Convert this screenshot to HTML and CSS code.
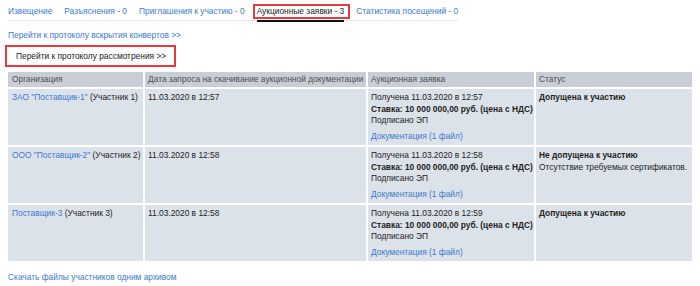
FILE: index.html
```html
<!doctype html>
<html>
<head>
    <meta http-equiv="Content-Type" content="text/html; charset=UTF-8" />
    <title>Аукционные заявки</title>
    <link rel="stylesheet" href="styles.css">
</head>
<body>

    <div class="tabs">
        <a class="tab" href="#">Извещение</a>
        <a class="tab" href="#">Разъяснения - 0</a>
        <a class="tab" href="#">Приглашения к участию - 0</a>
        <span class="tab active">Аукционные заявки - 3</span>
        <a class="tab" href="#">Статистика посещений - 0</a>
    </div>

    <div class="protocol_link"><a href="#">Перейти к протоколу вскрытия конвертов &gt;&gt;</a></div>

    <div class="btn_row"><span class="btn marked">Перейти к протоколу рассмотрения &gt;&gt;</span></div>

    <table class="bids">
        <tr class="head_row">
            <th class="col_org">Организация</th>
            <th class="col_date">Дата запроса на скачивание аукционной документации</th>
            <th class="col_bid">Аукционная заявка</th>
            <th class="col_status">Статус</th>
        </tr>
        <tr>
            <td><a href="#">ЗАО "Поставщик-1"</a> (Участник 1)</td>
            <td>11.03.2020 в 12:57</td>
            <td>
                <div>Получена 11.03.2020 в 12:57</div>
                <div class="rate">Ставка: 10 000 000,00 руб. (цена с НДС)</div>
                <div>Подписано ЭП</div>
                <div class="docs"><a href="#">Документация (1 файл)</a></div>
            </td>
            <td><div class="rate">Допущена к участию</div></td>
        </tr>
        <tr>
            <td><a href="#">ООО "Поставщик-2"</a> (Участник 2)</td>
            <td>11.03.2020 в 12:58</td>
            <td>
                <div>Получена 11.03.2020 в 12:58</div>
                <div class="rate">Ставка: 10 000 000,00 руб. (цена с НДС)</div>
                <div>Подписано ЭП</div>
                <div class="docs"><a href="#">Документация (1 файл)</a></div>
            </td>
            <td>
                <div class="rate">Не допущена к участию</div>
                <div>Отсутствие требуемых сертификатов.</div>
            </td>
        </tr>
        <tr>
            <td><a href="#">Поставщик-3</a> (Участник 3)</td>
            <td>11.03.2020 в 12:58</td>
            <td>
                <div>Получена 11.03.2020 в 12:59</div>
                <div class="rate">Ставка: 10 000 000,00 руб. (цена с НДС)</div>
                <div>Подписано ЭП</div>
                <div class="docs"><a href="#">Документация (1 файл)</a></div>
            </td>
            <td><div class="rate">Допущена к участию</div></td>
        </tr>
    </table>

    <div class="archive_link"><a href="#">Скачать файлы участников одним архивом</a></div>

</body>
</html>
```

FILE: styles.css
```css
body {
    margin: 0;
    padding: 5px 8px;
    font-family: "Liberation Sans", Arial, Helvetica, sans-serif;
    font-size: 8.4px;
    line-height: 12px;
    color: #222222;
    background: #FFFFFF;
}
a {
    color: #3a7ad0;
    text-decoration: none;
}
.tabs {
    display: inline-flex;
    gap: 12px;
    border-bottom: 1px solid #e4e4e4;
}
.tab {
    padding-bottom: 3px;
}
.tab.active {
    position: relative;
    color: #222222;
    border-bottom: 2px solid #111111;
    margin-bottom: -2px;
}
/* red marker drawn over the active tab */
.tab.active::after {
    content: "";
    position: absolute;
    left: -4px;
    right: -6px;
    top: -1px;
    bottom: 1px;
    border: 2px solid #e8393b;
}
.protocol_link {
    margin-top: 8px;
}
.btn_row {
    margin-top: 4px;
}
.btn {
    display: inline-block;
    margin-left: -3px;
    padding: 3px 8px 3px 9px;
    background: #FFFFFF;
}
.marked {
    border: 2px solid #e8393b;
}
table.bids {
    width: calc(100% + 4px);
    margin: 3px -2px 0 -2px;
    border-collapse: separate;
    border-spacing: 2px;
    table-layout: fixed;
}
.bids th,
.bids td {
    white-space: nowrap;
    overflow: hidden;
}
.bids th {
    background: #c9ced6;
    color: #4d4f52;
    font-weight: normal;
    text-align: left;
    padding: 1px 2px 2px 4px;
}
.bids td {
    background: #dce2ea;
    vertical-align: top;
    line-height: 11.5px;
    padding: 3px 2px 3px 4px;
}
.bids td + td,
.bids th + th {
    padding-left: 3px;
}
.col_org {
    width: 129px;
}
.col_date {
    width: 216px;
}
.col_bid {
    width: 161px;
}
.rate {
    font-weight: bold;
}
.docs {
    margin-top: 4px;
}
.archive_link {
    margin-top: 8px;
}
```
